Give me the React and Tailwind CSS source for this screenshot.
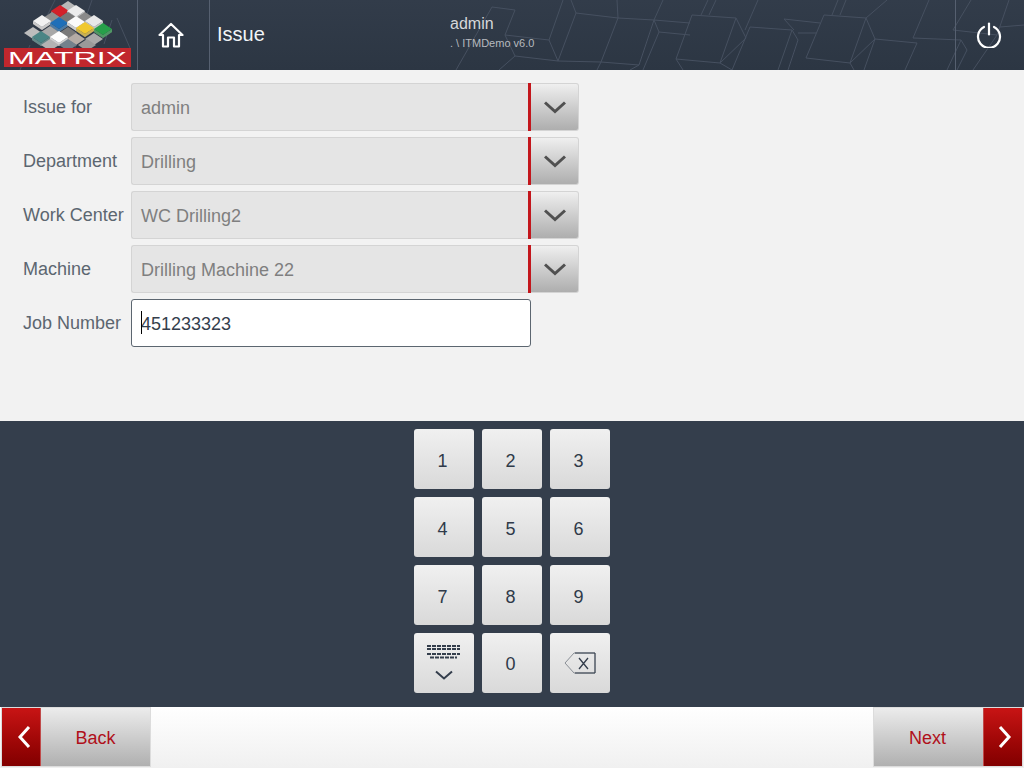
const font = { fontFamily: '"Liberation Sans", Arial, sans-serif' };

// [cx, cy, top colour, raised]
const tiles = [
  [68, 7, "#b9b9b9", 0], [60, 13, "#d3212a", 1], [76, 13, "#ececec", 1],
  [52, 18, "#8f8f8f", 0], [68, 18, "#777777", 0], [85, 18, "#8a8a8a", 0],
  [42, 23, "#f2f2f2", 1], [59, 25, "#1f6fb8", 1], [76, 24, "#fafafa", 1], [94, 23, "#e8e8e8", 1],
  [33, 33, "#bdbdbd", 0], [50, 32, "#a8a8a8", 0], [68, 33, "#7a7a7a", 0], [85, 30, "#f0c82e", 1], [103, 31, "#27a04a", 1],
  [41, 39, "#4a8585", 1], [59, 39, "#fdfdfd", 1], [76, 39, "#b5aca6", 0], [94, 39, "#a9a9a9", 0],
  [50, 45, "#b3b3b3", 0], [68, 45, "#73818c", 0], [87, 45, "#9a9a9a", 0],
];

const Logo = () => (
  <svg width="137" height="70" viewBox="0 0 137 70" className="block">
    {tiles.map(([x, y, c, raised], i) => {
      const t = raised ? y - 2 : y;
      const top = `${x - 9},${t} ${x},${t - 6} ${x + 9},${t} ${x},${t + 6}`;
      return (
        <g key={i}>
          {raised ? (
            <>
              <polygon points={`${x - 9},${t} ${x},${t + 6} ${x + 9},${t} ${x + 9},${t + 3} ${x},${t + 9} ${x - 9},${t + 3}`} fill="#8c8c8c" />
              <polygon points={`${x - 9},${t} ${x},${t + 6} ${x + 9},${t} ${x + 9},${t + 3} ${x},${t + 9} ${x - 9},${t + 3}`} fill={c} opacity="0.6" />
            </>
          ) : null}
          <polygon points={top} fill={c} />
        </g>
      );
    })}
    <rect x="4" y="48" width="127" height="19" fill="#c1272d" />
    <text x="8" y="63.5" textLength="119" lengthAdjust="spacingAndGlyphs" fill="#fff" fontSize="16" style={font}>MATRIX</text>
  </svg>
);

// faint wireframe buildings behind the header
const HeaderLines = () => (
  <svg className="absolute inset-0" width="1024" height="70" viewBox="0 0 1024 70" fill="none" stroke="#465060" strokeWidth="1">
    <path d="M92 0 L75 48 M112 20 L104 44 M117 18 L130 48 M55 0 L40 30 M20 70 L30 45" />
    <path d="M456 70 L492 7 L515 10 L505 35 L549 40 L558 61 L515 56 L505 35 M515 56 L499 70 M549 40 L563 0" />
    <path d="M571 0 L576 13 L618 18 L601 62 L558 61 L576 13 M617 0 L618 18 L654 20 L639 65 L601 62 M601 62 L597 70" />
    <path d="M654 20 L663 0 M654 20 L659 32 L643 70 M659 32 L690 35 M654 20 L690 23 M639 65 L630 70" />
    <path d="M692 15 L736 18 L746 38 L720 63 L676 59 L692 15 M736 18 L720 63 M701 15 L708 0 M709 15 L716 0 M676 59 L683 70 M720 63 L732 70" />
    <path d="M758 0 L745 30 M750 27 L792 30 L798 40 L788 70 M792 30 L778 70 M750 27 L732 70 M784 19 L820 23 M784 19 L794 30 M798 33 L816 33" />
    <path d="M824 15 L866 18 L875 39 L850 63 L806 58 L824 15 M866 18 L850 63 M832 15 L838 0 M840 15 L846 0 M866 18 L887 0 M850 63 L854 70" />
    <path d="M875 39 L917 43 L905 70 M875 39 L864 70 M913 38 L929 0 M913 38 L961 40 L967 50 L957 70 M961 40 L947 70" />
    <path d="M953 30 L997 35 L973 70 M953 30 L971 0 M997 35 L1009 0 M1000 27 L1024 25" />
  </svg>
);

const Chevron = () => (
  <svg width="22" height="13" viewBox="0 0 22 13" fill="none" stroke="currentColor" strokeWidth="3">
    <path d="M1 1.500 L11 10.500 L21 1.500" />
  </svg>
);

const SelectRow = ({ label, value }) => (
  <div className="flex items-center h-12">
    <label className="w-[108px] text-[18px] text-[#5c6670]">{label}</label>
    <div className="flex w-[448px] h-12">
      <div className="flex items-center w-[397px] pl-[9px] pt-[2px] bg-[#e5e5e5] border border-[#d4d4d4] border-r-0 rounded-l-[3px] text-[18px] text-[#7f7f7f]">
        {value}
      </div>
      <div className="w-[3px] bg-[#c3161c]" />
      <div className="flex items-center justify-center flex-1 rounded-r-[3px] border border-[#d4d4d4] border-l-0 bg-gradient-to-b from-[#efefef] to-[#aeaeae] text-[#505050]">
        <Chevron />
      </div>
    </div>
  </div>
);

const Key = ({ children }) => (
  <button className="flex items-center justify-center w-[60px] h-[60px] rounded-[3px] bg-gradient-to-b from-[#f0f0f0] to-[#d9d9d9] text-[18px] text-[#2f3a49]">
    {children}
  </button>
);

const KeyboardHide = () => (
  <svg width="36" height="44" viewBox="0 0 36 44" fill="none" stroke="#343e4c">
    <path d="M1 5 H34 M1 8 H34 M1 13 H34 M4 16.500 H31" strokeWidth="2" strokeDasharray="4 1" />
    <path d="M10 30.500 L18 37.500 L26 30.500" strokeWidth="2" />
  </svg>
);

const BackspaceIcon = () => (
  <svg width="32" height="24" viewBox="0 0 32 24" fill="none">
    <path d="M31 2 H10 L1 12 L10 22 H31 Z" stroke="#8a8f96" strokeWidth="1" />
    <path d="M11 2 H31 V22 H11" stroke="#343e4c" strokeWidth="1" />
    <path d="M15 7 L24 18 M24 7 L15 18" stroke="#343e4c" strokeWidth="1.300" />
  </svg>
);

const NavArrow = ({ flip }) => (
  <svg width="14" height="24" viewBox="0 0 14 24" fill="none" stroke="#fff" strokeWidth="3" className={flip ? "rotate-180" : ""}>
    <path d="M12 2 L3 12 L12 22" />
  </svg>
);

const App = () => {
  return (
    <div className="flex flex-col w-[1024px] h-[768px] overflow-hidden bg-[#f2f2f2]" style={font}>
      {/* HEADER */}
      <header className="relative flex h-[70px] shrink-0 bg-gradient-to-b from-[#323c4a] to-[#2c3643] text-white">
        <HeaderLines />
        <div className="relative w-[138px] border-r border-[#566070]">
          <Logo />
        </div>
        <div className="relative flex items-center justify-center w-[72px] pr-[6px] border-r border-[#566070]">
          <svg width="26" height="26" viewBox="0 0 26 26" fill="none" stroke="#fff" strokeWidth="2.200" strokeLinejoin="round">
            <path d="M1.500 13 L13 2 L24.500 13 H21 V24.500 H16 V15.500 H10 V24.500 H5 V13 Z" />
          </svg>
        </div>
        <div className="relative flex items-center w-[240px] pl-[7px] pb-[2px] text-[20px] text-[#f2f5f8]">Issue</div>
        <div className="relative flex flex-col w-[505px] pt-[15px] text-[#d5d7da]">
          <span className="text-[16px] leading-[18px]">admin</span>
          <span className="text-[11px] leading-[12px] mt-[4px] text-[#b6babf]">. \ ITMDemo v6.0</span>
        </div>
        <div className="relative flex items-center justify-center flex-1 border-l border-[#566070]">
          <svg width="26" height="26" viewBox="0 0 26 26" fill="none" stroke="#fff" strokeWidth="2.200" strokeLinecap="round" className="-ml-[2px]">
            <path d="M13 1.500 V12.500" />
            <path d="M8 5 A11 11 0 1 0 18 5" />
          </svg>
        </div>
      </header>

      {/* FORM */}
      <div className="flex flex-col gap-[6px] h-[351px] shrink-0 pt-[13px] pl-[23px]">
        <SelectRow label="Issue for" value="admin" />
        <SelectRow label="Department" value="Drilling" />
        <SelectRow label="Work Center" value="WC Drilling2" />
        <SelectRow label="Machine" value="Drilling Machine 22" />
        <div className="flex items-center h-12">
          <label className="w-[108px] text-[18px] text-[#5c6670]">Job Number</label>
          <div className="relative flex items-center w-[400px] h-12 pl-[9px] pt-[2px] bg-white border border-[#5c6670] rounded-[3px] text-[18px] text-[#343e4c]">
            <span className="absolute left-[9px] top-[11px] w-px h-[23px] bg-black" />
            451233323
          </div>
        </div>
      </div>

      {/* KEYPAD */}
      <div className="flex justify-center h-[286px] shrink-0 pt-2 bg-[#343e4c]">
        <div className="grid grid-cols-[60px_60px_60px] auto-rows-[60px] gap-2">
          {["1", "2", "3", "4", "5", "6", "7", "8", "9"].map((n) => (
            <Key key={n}><span className="pr-[3px] pt-[4px]">{n}</span></Key>
          ))}
          <Key><KeyboardHide /></Key>
          <Key><span className="pr-[3px] pt-[2px]">0</span></Key>
          <Key><BackspaceIcon /></Key>
        </div>
      </div>

      {/* FOOTER */}
      <footer className="flex items-start justify-between flex-1 px-[1px] bg-gradient-to-b from-white to-[#f0f0f0]">
        <button className="flex w-[150px] h-[60px] border border-[#dcdcdc]">
          <span className="flex items-center justify-center w-[39px] pl-[5px] bg-gradient-to-b from-[#c81414] to-[#820000] border-r border-[#c04a4a]"><NavArrow /></span>
          <span className="flex items-center justify-center flex-1 pt-[2px] bg-gradient-to-b from-[#ececec] to-[#b0b0b0] text-[18px] text-[#b0101a]">Back</span>
        </button>
        <button className="flex w-[150px] h-[60px] border border-[#dcdcdc]">
          <span className="flex items-center justify-center flex-1 pr-[2px] pt-[2px] bg-gradient-to-b from-[#ececec] to-[#b0b0b0] text-[18px] text-[#b0101a]">Next</span>
          <span className="flex items-center justify-center w-[39px] pl-[3px] bg-gradient-to-b from-[#c81414] to-[#820000] border-l border-[#c04a4a]"><NavArrow flip /></span>
        </button>
      </footer>
    </div>
  );
};

export default App;
